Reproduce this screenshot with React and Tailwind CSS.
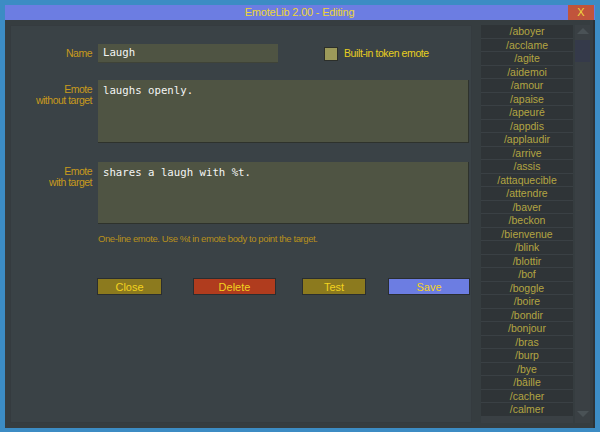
import React from "react";

const emotes = [
  "/aboyer", "/acclame", "/agite", "/aidemoi", "/amour", "/apaise", "/apeuré",
  "/appdis", "/applaudir", "/arrive", "/assis", "/attaquecible", "/attendre",
  "/baver", "/beckon", "/bienvenue", "/blink", "/blottir", "/bof", "/boggle",
  "/boire", "/bondir", "/bonjour", "/bras", "/burp", "/bye", "/bâille",
  "/cacher", "/calmer",
];

const mono = { fontFamily: "'DejaVu Sans Mono', monospace" };

const Label = ({ children }) => (
  <div className="w-[81px] shrink-0 text-right text-[10.5px] leading-[11px] tracking-[-0.5px] text-[#c89a1c]">
    {children}
  </div>
);

const Btn = ({ color, children }) => (
  <div
    className={
      "h-[17px] flex items-center justify-center text-[11px] text-[#f2d21e] border border-[#2a2e30] " +
      color
    }
  >
    {children}
  </div>
);

export default function App() {
  return (
    <div
      className="w-[600px] h-[432px] bg-[#3c8cc4] pt-[5px] px-[5px] pb-[4px] flex flex-col"
      style={{ fontFamily: "'Liberation Sans', Arial, sans-serif" }}
    >
      {/* title bar */}
      <div className="h-[15px] bg-[#6c7de2] flex items-center">
        <div className="flex-1 pl-[26px] text-center text-[11px] leading-[15px] tracking-[-0.2px] text-[#ecd636]">
          EmoteLib 2.00 - Editing
        </div>
        <div className="w-[26px] h-[15px] mr-[1px] bg-[#c1543c] flex items-center justify-center text-[11px] text-[#f0d840]">
          X
        </div>
      </div>

      {/* body */}
      <div className="flex-1 bg-[#363d40] border-r-2 border-[#2c3236] flex p-[5px] pr-[3px]">
        {/* form panel */}
        <div className="w-[462px] bg-[#3a4246] border border-[#353b3f] pt-[18px] flex flex-col">
          <div className="flex items-center">
            <Label>Name</Label>
            <div className="ml-[6px] w-[180px] h-[19px] bg-[#4f5443] border-b border-[#3f4338] flex items-center pl-[5px] text-[10.7px] text-[#f4f4f4]" style={mono}>
              Laugh
            </div>
            <div className="ml-[46px] w-[14px] h-[14px] bg-[#9c9a5a] border border-[#2c2f2a]" />
            <div className="ml-[6px] text-[10.5px] tracking-[-0.4px] text-[#e8d020]">Built-in token emote</div>
          </div>

          <div className="flex mt-[17px]">
            <div className="pt-[4px]">
              <Label>
                Emote
                <br />
                without target
              </Label>
            </div>
            <div className="ml-[6px] w-[371px] h-[63px] bg-[#4f5443] border-r border-b border-[#2e322c] pl-[5px] pt-[3px] text-[10.7px] text-[#f4f4f4]" style={mono}>
              laughs openly.
            </div>
          </div>

          <div className="flex mt-[19px]">
            <div className="pt-[4px]">
              <Label>
                Emote
                <br />
                with target
              </Label>
            </div>
            <div className="ml-[6px] w-[371px] h-[62px] bg-[#4f5443] border-r border-b border-[#2e322c] pl-[5px] pt-[3px] text-[10.7px] text-[#f4f4f4]" style={mono}>
              shares a laugh with %t.
            </div>
          </div>

          <div className="ml-[87px] mt-[8px] text-[9.5px] tracking-[-0.4px] text-[#b8901c]">
            One-line emote. Use %t in emote body to point the target.
          </div>

          <div className="ml-[86px] mt-[32px] flex">
            <div className="w-[65px]">
              <Btn color="bg-[#8c7a1e]">Close</Btn>
            </div>
            <div className="w-[83px] ml-[31px]">
              <Btn color="bg-[#b03c1e]">Delete</Btn>
            </div>
            <div className="w-[64px] ml-[26px]">
              <Btn color="bg-[#8c7a1e]">Test</Btn>
            </div>
            <div className="w-[82px] ml-[22px]">
              <Btn color="bg-[#6c7de2]">Save</Btn>
            </div>
          </div>
        </div>

        {/* list */}
        <div className="ml-[9px] w-[92px] flex flex-col gap-px bg-[#3a4044]">
          {emotes.map((e) => (
            <div
              key={e}
              className="h-[12.5px] bg-[#2f3437] flex items-center justify-center text-[10.5px] leading-none text-[#b3a542]"
            >
              {e}
            </div>
          ))}
        </div>

        {/* scrollbar */}
        <div className="ml-[2px] w-[15px] flex flex-col items-center bg-[#3a4044]">
          <div className="mt-[3px] w-0 h-0 border-l-[6px] border-r-[6px] border-b-[6px] border-l-transparent border-r-transparent border-b-[#4a5256]" />
          <div className="mt-[6px] w-[15px] h-[22px] bg-[#353a4a]" />
          <div className="flex-1" />
          <div className="mb-[6px] w-0 h-0 border-l-[6px] border-r-[6px] border-t-[6px] border-l-transparent border-r-transparent border-t-[#4a5256]" />
        </div>
      </div>
    </div>
  );
}
